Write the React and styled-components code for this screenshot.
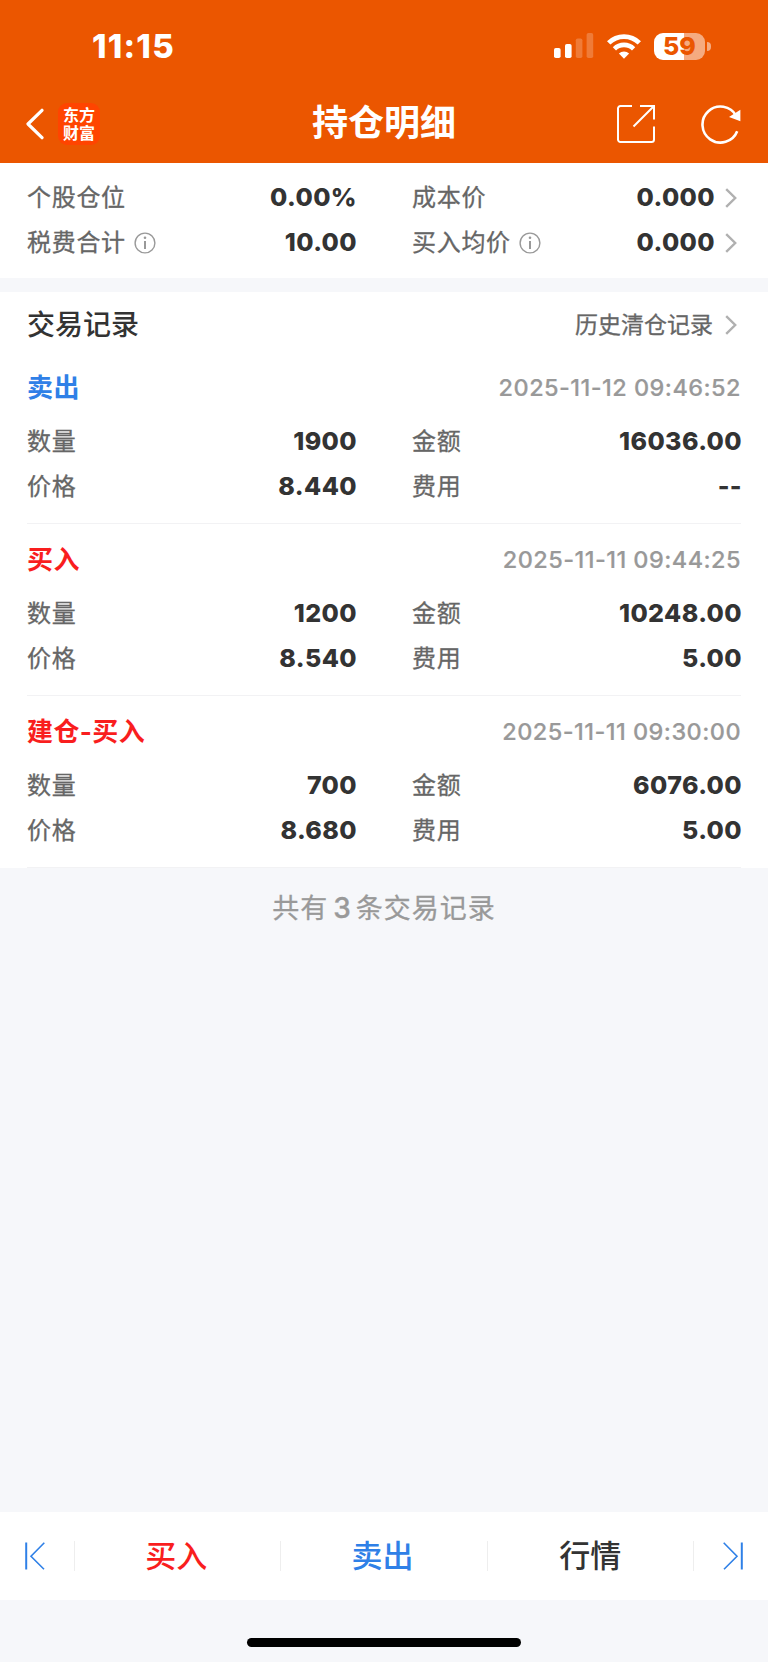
import React from 'react';
import styled, { createGlobalStyle } from 'styled-components';

const colors = {
  brand: '#eb5600',
  page: '#f6f7fa',
  text: '#333333',
  label: '#666666',
  muted: '#999999',
  blue: '#2f80e7',
  red: '#f91e1e',
  line: '#f2f2f4',
};

const records = [
  {
    type: '卖出',
    color: colors.blue,
    time: '2025-11-12 09:46:52',
    amount: '1900',
    price: '8.440',
    total: '16036.00',
    fee: '--',
  },
  {
    type: '买入',
    color: colors.red,
    time: '2025-11-11 09:44:25',
    amount: '1200',
    price: '8.540',
    total: '10248.00',
    fee: '5.00',
  },
  {
    type: '建仓-买入',
    color: colors.red,
    time: '2025-11-11 09:30:00',
    amount: '700',
    price: '8.680',
    total: '6076.00',
    fee: '5.00',
  },
];

// Icons
const Signal = () => (
  <svg width='40' height='26' viewBox='0 0 40 26' fill='#fff'>
    <rect x='0' y='15' width='6.6' height='10' rx='1.8' />
    <rect x='11' y='11' width='6.6' height='14' rx='1.8' />
    <rect x='21.8' y='5.5' width='6.6' height='19.5' rx='1.8' opacity='.22' />
    <rect x='32.6' y='0' width='6.6' height='25' rx='1.8' opacity='.22' />
  </svg>
);

const Wifi = () => (
  <svg width='34' height='25' viewBox='0 0 34 25' fill='none' stroke='#fff'>
    <path d='M1.7 8.9A21.8 21.8 0 0 1 32.3 8.9' strokeWidth='4.8' />
    <path d='M7.4 14.8A13.6 13.6 0 0 1 26.6 14.8' strokeWidth='4.6' />
    <path
      d='M17 24.7L11.9 19.6A7.3 7.3 0 0 1 22.1 19.6Z'
      fill='#fff'
      stroke='none'
    />
  </svg>
);

const Back = () => (
  <svg width='19' height='32' viewBox='0 0 19 32'>
    <path d='M17 2.3L3 16l14 13.7' fill='none' stroke='#fff' strokeWidth='3.2' strokeLinecap='round' strokeLinejoin='round' />
  </svg>
);

const Share = () => (
  <svg width='38' height='38' viewBox='0 0 38 38' fill='none' stroke='#fff' strokeWidth='2'>
    <path d='M15 1H3.5A2.5 2.5 0 0 0 1 3.5v31A2.5 2.5 0 0 0 3.5 37h31a2.5 2.5 0 0 0 2.5-2.5V21.5' />
    <path d='M23 1h14v13.5M36.5 1.5L16.5 21.5' />
  </svg>
);

const Refresh = () => (
  <svg width='40' height='40' viewBox='0 0 40 40'>
    <path d='M35.2 11.8A18 18 0 1 0 36.2 27.3' fill='none' stroke='#fff' strokeWidth='2.6' />
    <path d='M39.4 5.8v11.4L28 13Z' fill='#fff' />
  </svg>
);

const Info = () => (
  <svg width='22' height='22' viewBox='0 0 22 22' fill='none' stroke='#999'>
    <circle cx='11' cy='11' r='9.9' strokeWidth='1.4' />
    <path d='M11 9v8' strokeWidth='2' />
    <circle cx='11' cy='5.8' r='1.3' fill='#999' stroke='none' />
  </svg>
);

const Chevron = () => (
  <svg width='12' height='20' viewBox='0 0 12 20'>
    <path d='M1.2 1.2L10.2 10l-9 8.8' fill='none' stroke='#b0b0b0' strokeWidth='2.4' />
  </svg>
);

const Jump = () => (
  <svg width='20' height='28' viewBox='0 0 20 28' fill='none' stroke={colors.blue}>
    <path d='M1.2 .5v27' strokeWidth='2' />
    <path d='M19.3 .8L6 14.3l13 13' strokeWidth='1.6' />
  </svg>
);

const Field = ({ label, value, info, link }) => (
  <FieldStyle>
    <Label>{label}</Label>
    {info && <Info />}
    <Value>{value}</Value>
    {link && <Chevron />}
  </FieldStyle>
);

const App = () => {
  return (
    <Page>
      <GlobalStyle />
      <Header>
        <StatusBar>
          <Clock>11:15</Clock>
          <StatusIcons>
            <Signal />
            <Wifi />
            <Battery>
              <Charge>59</Charge>
              <Nub />
            </Battery>
          </StatusIcons>
        </StatusBar>
        <NavBar>
          <NavSide>
            <Back />
            <Logo>
              <span>东方</span>
              <span>财富</span>
            </Logo>
          </NavSide>
          <Title>持仓明细</Title>
          <NavSide $end>
            <Share />
            <Refresh />
          </NavSide>
        </NavBar>
      </Header>

      <Summary>
        <Field label='个股仓位' value='0.00%' />
        <Field label='成本价' value='0.000' link />
        <Field label='税费合计' value='10.00' info />
        <Field label='买入均价' value='0.000' info link />
      </Summary>

      <Records>
        <RecordsHead>
          <h2>交易记录</h2>
          <HistoryLink>
            历史清仓记录
            <Chevron />
          </HistoryLink>
        </RecordsHead>
        {records.map((item) => (
          <Record key={item.time}>
            <RecordTop>
              <Type $color={item.color}>{item.type}</Type>
              <Time>{item.time}</Time>
            </RecordTop>
            <Grid>
              <Field label='数量' value={item.amount} />
              <Field label='金额' value={item.total} />
              <Field label='价格' value={item.price} />
              <Field label='费用' value={item.fee} />
            </Grid>
          </Record>
        ))}
      </Records>
      <Count>
        共有<b>{records.length}</b>条交易记录
      </Count>

      <BottomBar>
        <JumpButton>
          <Jump />
        </JumpButton>
        <Tab $color={colors.red}>买入</Tab>
        <Tab $color={colors.blue}>卖出</Tab>
        <Tab $color={colors.text}>行情</Tab>
        <JumpButton $last>
          <Jump />
        </JumpButton>
      </BottomBar>
      <HomeArea>
        <HomeIndicator />
      </HomeArea>
    </Page>
  );
};

const GlobalStyle = createGlobalStyle`
  * {
    box-sizing: border-box;
  }
  body {
    margin: 0;
    background: ${colors.page};
    font-family: Inter, 'Noto Sans CJK SC', sans-serif;
  }
  svg {
    display: block;
    flex: none;
  }
`;

const Page = styled.div`
  width: 768px;
  height: 1662px;
  display: flex;
  flex-direction: column;
  overflow: hidden;
  background: ${colors.page};
  color: ${colors.text};
`;

const Header = styled.header`
  height: 163px;
  flex: none;
  background: ${colors.brand};
  color: #fff;
`;

const StatusBar = styled.div`
  height: 92px;
  display: flex;
  align-items: center;
  justify-content: space-between;
  padding: 0 57px 0 92px;
`;

const Clock = styled.div`
  font-size: 33px;
  font-weight: 800;
  line-height: 40px;
  letter-spacing: 1.2px;
`;

const StatusIcons = styled.div`
  display: flex;
  align-items: center;
  gap: 13px;
`;

const Battery = styled.div`
  display: flex;
  align-items: center;
  gap: 2px;
`;

const Charge = styled.div`
  width: 51px;
  height: 27px;
  border-radius: 9px;
  background: linear-gradient(to right, #fff 59%, rgba(255, 255, 255, 0.5) 59%);
  color: ${colors.brand};
  font-size: 25px;
  font-weight: 800;
  line-height: 27px;
  text-align: center;
`;

const Nub = styled.div`
  width: 4px;
  height: 9px;
  border-radius: 0 4px 4px 0;
  background: rgba(255, 255, 255, 0.5);
`;

const NavBar = styled.div`
  height: 64px;
  display: flex;
  align-items: center;
  padding: 0 27px 0 25px;
`;

const NavSide = styled.div`
  flex: 1;
  display: flex;
  align-items: center;
  justify-content: ${(p) => (p.$end ? 'flex-end' : 'flex-start')};
  gap: ${(p) => (p.$end ? '46px' : '14px')};
`;

const Logo = styled.div`
  width: 42px;
  height: 42px;
  display: flex;
  flex-direction: column;
  align-items: center;
  justify-content: center;
  border-radius: 9px;
  background: #ff4400;
  font-size: 16px;
  font-weight: 700;
  line-height: 18px;
`;

const Title = styled.h1`
  margin: 0 -1px 2px 1px;
  font-size: 36px;
  font-weight: 700;
  line-height: 48px;
`;

const Grid = styled.div`
  display: grid;
  grid-template-columns: 1fr 1fr;
  column-gap: 56px;
  grid-auto-rows: 45px;
`;

const Summary = styled(Grid)`
  height: 115px;
  flex: none;
  padding: 12px 27px 0;
  background: #fff;
`;

const FieldStyle = styled.div`
  display: flex;
  align-items: center;
  svg {
    margin-left: 8px;
  }
  svg:last-child {
    margin: 0 4px 0 11px;
  }
`;

const Label = styled.span`
  font-size: 24px;
  letter-spacing: 0.7px;
  line-height: 34px;
  color: ${colors.label};
  -webkit-text-stroke: 0.3px;
`;

const Value = styled.span`
  margin: 0 -1px 0 auto;
  font-size: 25px;
  font-weight: 800;
  line-height: 32px;
  padding-bottom: 1px;
  letter-spacing: 0.4px;
`;

const Records = styled.section`
  flex: none;
  margin-top: 14px;
  background: #fff;
`;

const RecordsHead = styled.div`
  height: 60px;
  display: flex;
  align-items: center;
  justify-content: space-between;
  padding: 5px 31px 0 27px;
  h2 {
    margin: 0;
    font-size: 28px;
    font-weight: 500;
    line-height: 40px;
  }
`;

const HistoryLink = styled.div`
  display: flex;
  align-items: center;
  gap: 12px;
  font-size: 23px;
  line-height: 34px;
  color: ${colors.label};
  -webkit-text-stroke: 0.3px;
`;

const Record = styled.div`
  height: 172px;
  margin: 0 27px;
  padding-top: 13px;
  border-bottom: 1px solid ${colors.line};
`;

const RecordTop = styled.div`
  height: 46px;
  display: flex;
  align-items: center;
  justify-content: space-between;
  margin-bottom: 8px;
`;

const Type = styled.span`
  font-size: 26px;
  font-weight: 700;
  line-height: 36px;
  letter-spacing: 0.4px;
  color: ${(p) => p.$color};
`;

const Time = styled.span`
  font-size: 23.5px;
  font-weight: 500;
  line-height: 34px;
  letter-spacing: 0.45px;
  color: ${colors.muted};
  -webkit-text-stroke: 0.2px;
`;

const Count = styled.div`
  flex: 1;
  padding-top: 20px;
  font-size: 27px;
  line-height: 40px;
  letter-spacing: 1px;
  text-align: center;
  color: ${colors.muted};
  -webkit-text-stroke: 0.3px;
  b {
    margin: 0 4px 0 5px;
    font-size: 28px;
    font-weight: 500;
  }
`;

const BottomBar = styled.nav`
  height: 88px;
  flex: none;
  display: flex;
  align-items: center;
  background: #fff;
`;

const JumpButton = styled.div`
  width: 74px;
  flex: none;
  padding-left: 25px;
  transform: ${(p) => (p.$last ? 'scaleX(-1)' : 'none')};
`;

const Tab = styled.div`
  flex: 1;
  height: 30px;
  border-left: 1px solid #eeeeee;
  font-size: 31px;
  font-weight: 500;
  line-height: 30px;
  text-align: center;
  text-indent: -3px;
  color: ${(p) => p.$color};
  &:nth-last-child(2) {
    border-right: 1px solid #eeeeee;
    text-indent: 0;
  }
`;

const HomeArea = styled.div`
  height: 62px;
  flex: none;
  display: flex;
  justify-content: center;
  padding-top: 38px;
`;

const HomeIndicator = styled.div`
  width: 274px;
  height: 9px;
  border-radius: 5px;
  background: #000;
`;

export default App;
